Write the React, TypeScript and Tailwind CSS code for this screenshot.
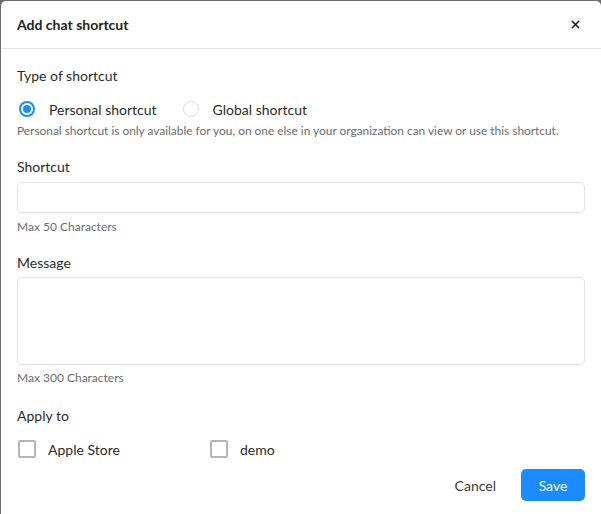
import React, { useState } from "react";
import { X } from "lucide-react";

const Radio: React.FC<{ checked: boolean; label: string; onClick: () => void }> = ({
  checked,
  label,
  onClick,
}) => (
  <button onClick={onClick} className="flex items-center h-5 mr-[24px]">
    <span
      className={`w-4 h-4 rounded-full flex items-center justify-center ml-[2px] ${
        checked ? "border-2 border-[#1a8cff]" : "border border-[#dcdce2]"
      }`}
    >
      {checked && <span className="w-2 h-2 rounded-full bg-[#1a8cff]" />}
    </span>
    <span className="ml-[14px] text-[14px] text-[#2b2b2b]">{label}</span>
  </button>
);

const Check: React.FC<{ label: string }> = ({ label }) => {
  const [on, setOn] = useState(false);
  return (
    <button onClick={() => setOn(!on)} className="flex items-center h-5 w-[192px]">
      <span
        className={`w-[18px] h-[18px] ml-[1px] rounded-[2px] border-2 ${
          on ? "bg-[#1a8cff] border-[#1a8cff]" : "border-[#b4b4ba]"
        }`}
      />
      <span className="ml-[12px] text-[14px] text-[#2b2b2b]">{label}</span>
    </button>
  );
};

export default function App() {
  const [type, setType] = useState<"personal" | "global">("personal");

  return (
    <div
      className="h-[514px] overflow-hidden bg-[#6e6e6e] pt-[1px] pl-[1px]"
      style={{ fontFamily: "Lato, 'Open Sans', sans-serif" }}
    >
      <div className="w-[600px] h-[560px] bg-white rounded-[5px]">
        {/* Header */}
        <div className="h-[48px] flex items-center justify-between pl-4 pr-[19px] border-b border-[#e3e4ea]">
          <h3 className="text-[14px] font-bold text-[#222]">Add chat shortcut</h3>
          <button className="text-[#111]">
            <X size={13} strokeWidth={2.6} />
          </button>
        </div>

        <div className="px-4">
          <div className="pt-[17px] text-[14px] leading-5 text-[#2b2b2b]">Type of shortcut</div>
          <div className="mt-[13px] flex">
            <Radio checked={type === "personal"} label="Personal shortcut" onClick={() => setType("personal")} />
            <Radio checked={type === "global"} label="Global shortcut" onClick={() => setType("global")} />
          </div>
          <p className="mt-[4px] text-[11.9px] leading-4 text-[#6b6b72]">
            Personal shortcut is only available for you, on one else in your organization can view or use this shortcut.
          </p>

          <div className="mt-[18px] text-[14px] leading-5 text-[#2b2b2b]">Shortcut</div>
          <input className="mt-[5px] block w-full h-[31px] rounded-[5px] border border-[#e1e1e8] px-3 text-[14px] outline-none" />
          <div className="mt-[6px] text-[12px] leading-4 text-[#6b6b72]">Max 50 Characters</div>

          <div className="mt-[18px] text-[14px] leading-5 text-[#2b2b2b]">Message</div>
          <textarea className="mt-[4px] block w-full h-[88px] rounded-[5px] border border-[#e1e1e8] px-3 py-2 text-[14px] outline-none resize-none" />
          <div className="mt-[5px] text-[12px] leading-4 text-[#6b6b72]">Max 300 Characters</div>

          <div className="mt-[20px] text-[14px] leading-5 text-[#2b2b2b]">Apply to</div>
          <div className="mt-[13px] flex">
            <Check label="Apple Store" />
            <Check label="demo" />
          </div>

          <div className="mt-[10px] flex justify-end items-center">
            <button className="px-3 h-8 text-[14px] text-[#3a3a40] mr-[13px]">Cancel</button>
            <button className="w-16 h-8 rounded-[5px] bg-[#1a8cff] text-white text-[14px]">Save</button>
          </div>
        </div>
      </div>
    </div>
  );
}
